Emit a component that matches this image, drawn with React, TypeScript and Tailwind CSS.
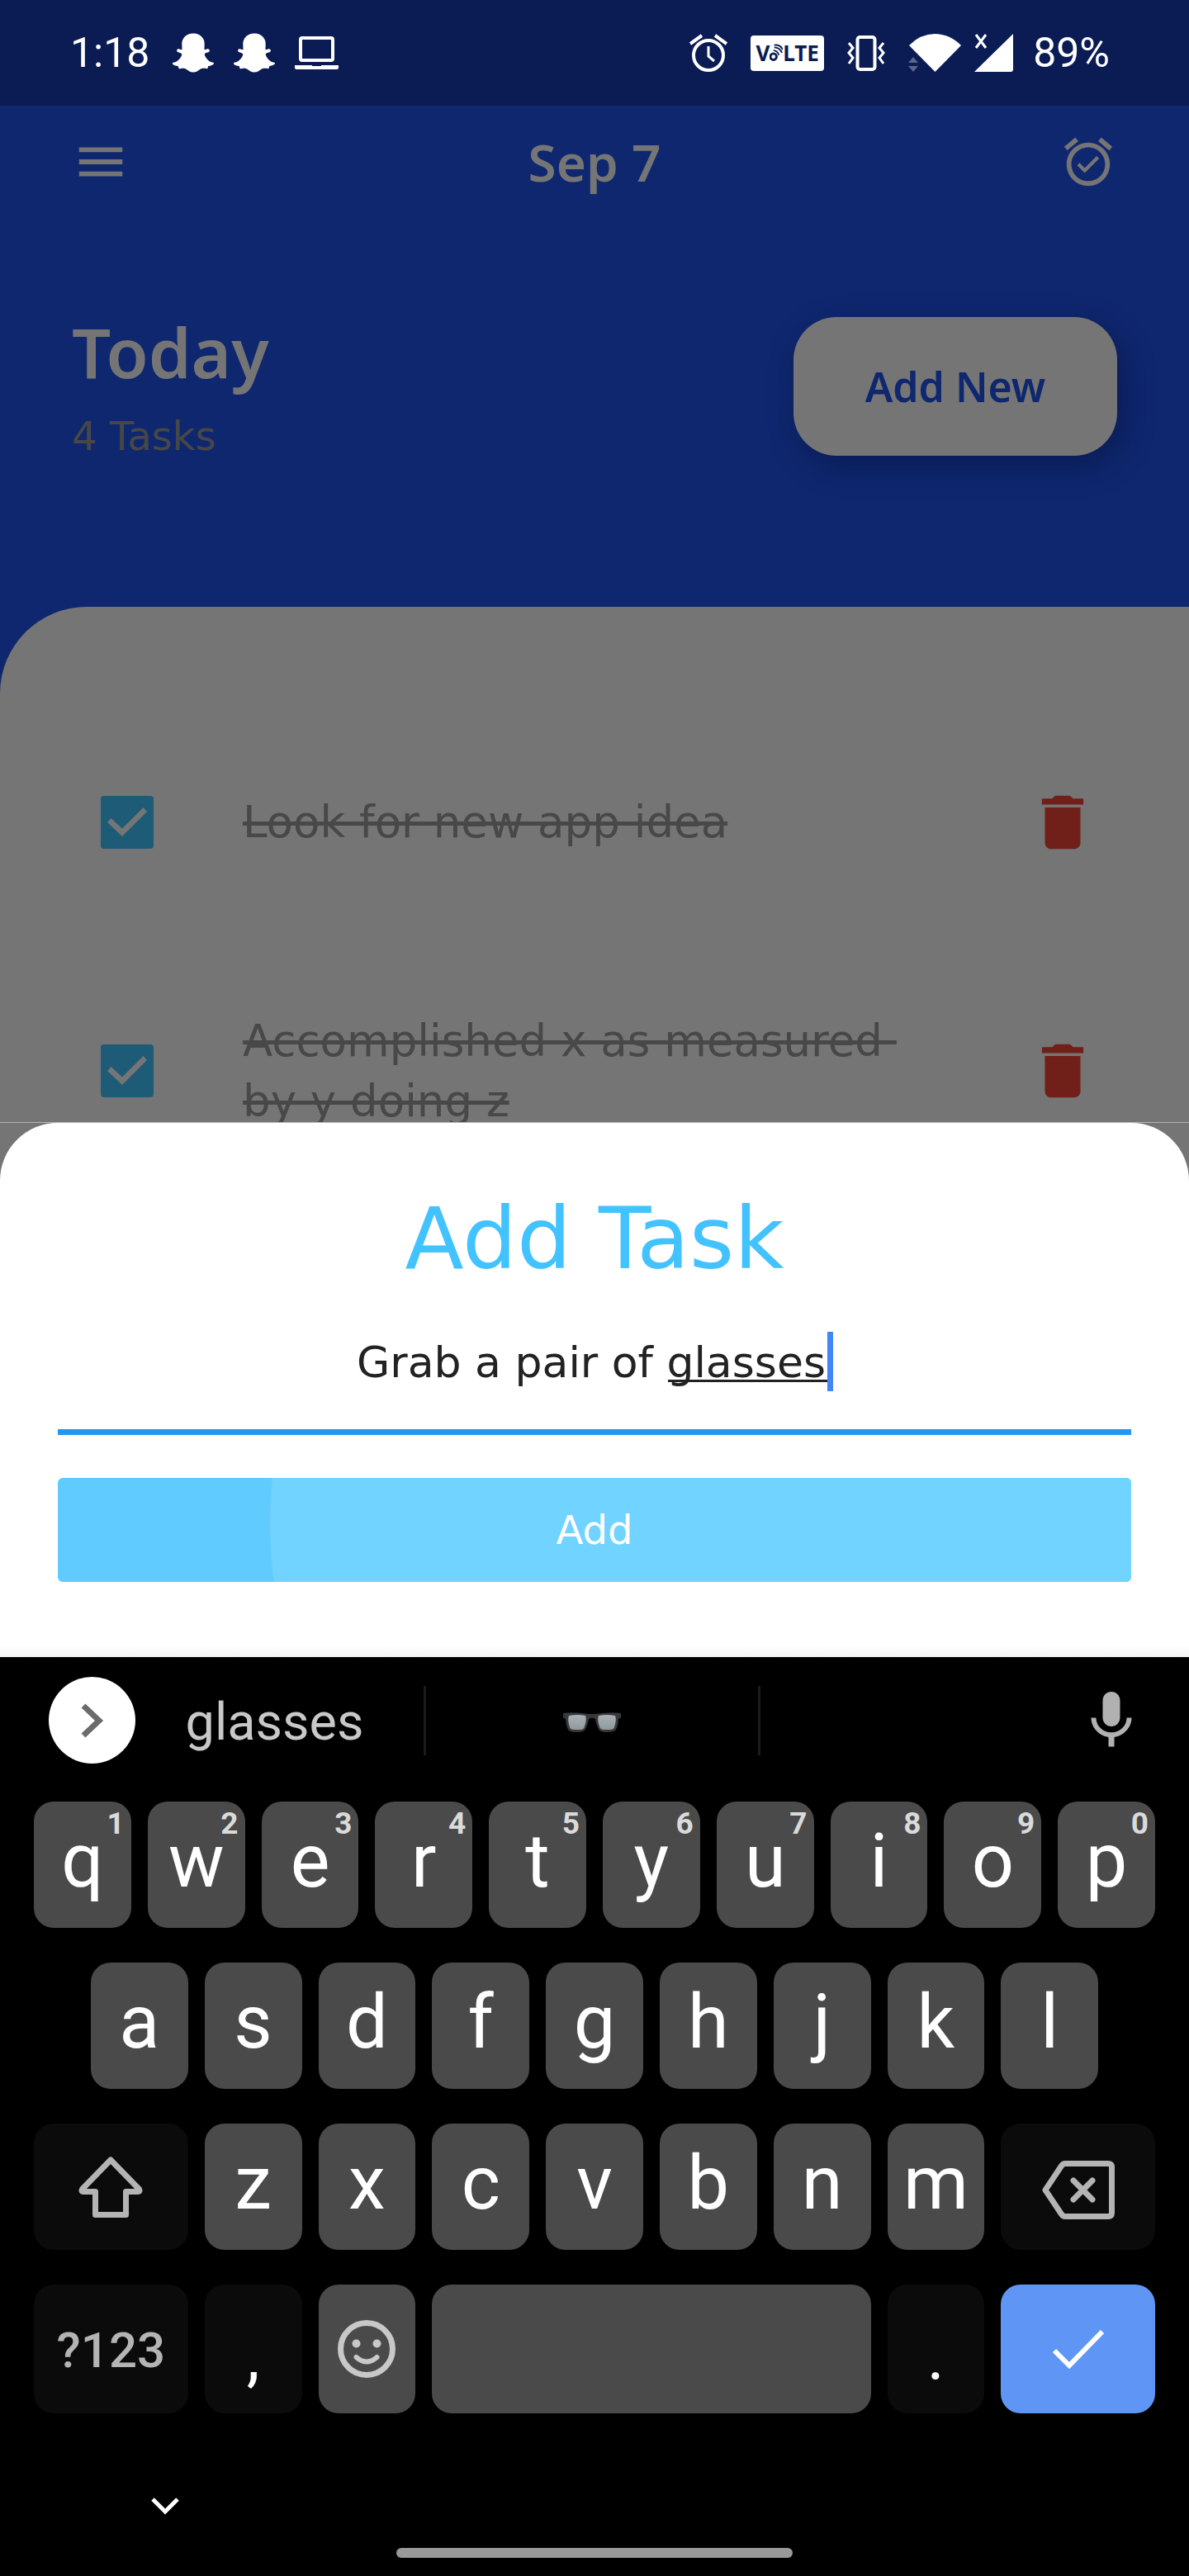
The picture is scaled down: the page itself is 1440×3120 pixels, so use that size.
import React, { useState } from "react";
import { FaSnapchatGhost } from "react-icons/fa";
import { MdAlarmOn, MdDelete, MdMenu, MdMic } from "react-icons/md";

const BODY = "font-['DejaVu_Sans',sans-serif]";
const BOLD = "font-['Noto_Sans',sans-serif] font-semibold";

function LaptopIcon() {
  return (
    <svg width="53" height="40" viewBox="0 0 53 40" aria-hidden="true">
      <rect x="7" y="2" width="39" height="27" rx="2" fill="none" stroke="#fff" strokeWidth="4" />
      <path d="M0 35H21V36H32V35H53V38Q53 40 51 40H2Q0 40 0 38Z" fill="#fff" />
    </svg>
  );
}

function AlarmIcon() {
  return (
    <svg width="46" height="46" viewBox="0 0 46 46" fill="none" stroke="#fff" strokeWidth="4" aria-hidden="true">
      <circle cx="23" cy="26" r="18" />
      <path d="M23 15V27L30 33" strokeWidth="3" />
      <path d="M1 12L15 2M45 12L31 2" />
    </svg>
  );
}

function VolteBadge() {
  return (
    <div className="flex h-[43px] w-[89px] items-center justify-center rounded-sm bg-white font-['Noto_Sans',sans-serif] text-[26px] leading-none font-bold text-[#0b1b54]">
      <span>V</span>
      <svg width="16" height="22" viewBox="0 0 17 22" fill="none" stroke="#0b1b54" aria-label="o" role="img">
        <circle cx="5" cy="16" r="4" strokeWidth="3" />
        <path d="M5 8Q10 8 12 14M6 4Q13 4 16 11M6 1Q14 0 17 7" strokeWidth="2" />
      </svg>
      <span>LTE</span>
    </div>
  );
}

function VibrateIcon() {
  return (
    <svg width="46" height="43" viewBox="0 0 46 43" fill="none" stroke="#fff" strokeWidth="3" aria-hidden="true">
      <rect x="12.500" y="2" width="21" height="39" rx="3" strokeWidth="4" />
      <path d="M2 9L7 15L2 21L7 27L2 34M44 9L39 15L44 21L39 27L44 34" />
    </svg>
  );
}

function WifiIcon() {
  return (
    <svg width="64" height="46" viewBox="0 0 64 46" aria-hidden="true">
      <path d="M1 14Q15 0 32 0Q50 0 64 14L32.500 46Z" fill="#fff" />
      <path d="M6 28L12 35H0ZM6 46L0 39H12Z" fill="#5a648c" />
    </svg>
  );
}

function SignalIcon() {
  return (
    <svg width="47" height="46" viewBox="0 0 47 46" aria-hidden="true">
      <path d="M47 0V43Q47 46 44 46H0Z" fill="#fff" />
      <path d="M2 1L14 17M14 1L2 17" stroke="#fff" strokeWidth="3" />
    </svg>
  );
}

function StatusBar() {
  return (
    <div className="flex h-32 items-center justify-between bg-[#0b1b54] pr-24 pl-[85px] font-['Roboto',sans-serif] text-[50px] leading-none text-white">
      <div className="flex items-center gap-6">
        <span>1:18</span>
        <span className="flex items-center gap-6 pl-1">
          <FaSnapchatGhost size={50} aria-hidden="true" />
          <FaSnapchatGhost size={50} aria-hidden="true" />
        </span>
        <LaptopIcon />
      </div>
      <div className="flex items-center gap-6">
        <div className="flex items-center gap-7">
          <AlarmIcon />
          <VolteBadge />
          <VibrateIcon />
          <div className="flex gap-4">
            <WifiIcon />
            <SignalIcon />
          </div>
        </div>
        <span>89%</span>
      </div>
    </div>
  );
}

function Header() {
  return (
    <header>
      <div className="flex h-[136px] items-center justify-between px-[87px] text-[#757575]">
        <button aria-label="Menu">
          <MdMenu size={70} />
        </button>
        <h1 className={`${BOLD} text-[62px] leading-none`}>Sep 7</h1>
        <button aria-label="Reminders">
          <MdAlarmOn size={70} />
        </button>
      </div>
      <div className="flex items-center justify-between px-[87px] pt-[110px] pb-[173px]">
        <div className="flex flex-col gap-5 pb-1">
          <h2 className={`${BOLD} text-[83px] leading-[104px] text-[#757575]`}>Today</h2>
          <p className={`${BODY} text-5xl leading-[60px] text-[#474747]`}>4 Tasks</p>
        </div>
        <button
          className={`${BOLD} h-[168px] w-[392px] rounded-[52px] bg-[#757575] text-[50px] text-[#0f276f] shadow-[8px_12px_36px_rgba(5,15,50,0.45)]`}
        >
          Add New
        </button>
      </div>
    </header>
  );
}

const TASKS = [
  { id: "task-1", text: "Look for new app idea" },
  { id: "task-2", text: "Accomplished x as measured by y doing z" },
];

function TaskRow({ id, text }: { id: string; text: string }) {
  const [done, setDone] = useState(true);
  return (
    <li className="flex h-[301px] items-center pr-[110px] pl-[122px]">
      <span className="relative flex size-16 shrink-0">
        <input
          id={id}
          type="checkbox"
          checked={done}
          onChange={() => setDone(!done)}
          className="size-16 appearance-none rounded border-8 border-[#1d5b77] checked:bg-[#1d5b77]"
        />
        {done && (
          <svg className="pointer-events-none absolute inset-0" width="64" height="64" viewBox="0 0 64 64" aria-hidden="true">
            <path d="M8 32L12.500 27L26 39.500L51.500 14L56 19L26 49Z" fill="#757575" />
          </svg>
        )}
      </span>
      <label
        htmlFor={id}
        className={`${BODY} ml-[108px] w-[830px] text-[53px] leading-[73px] whitespace-break-spaces text-[#484848] ${done ? "line-through" : ""}`}
      >
        {text}
      </label>
      <button aria-label={`Delete ${text}`} className="ml-auto text-[#701f19]">
        <MdDelete size={86} />
      </button>
    </li>
  );
}

function AddTaskSheet() {
  const [value, setValue] = useState("Grab a pair of glasses");
  return (
    <div className="relative -mt-[88px] border-t border-[#b4b4b4]">
      <form
        onSubmit={(e) => e.preventDefault()}
        className={`${BODY} flex flex-col rounded-t-[70px] bg-white bg-[linear-gradient(to_top,#f4f4f4,#ffffff_14px)] px-[70px] pt-20 pb-[91px]`}
      >
        <h2 className="text-center text-[104px] leading-[120px] text-[#42c3ff]">Add Task</h2>
        <div className="relative mt-3">
          <input
            aria-label="Task name"
            value={value}
            onChange={(e) => setValue(e.target.value)}
            className="h-[166px] w-full border-b-[7px] border-[#2196f3] pr-2 pb-1 text-center text-[52px] text-[#222222] caret-transparent outline-none"
          />
          {/* Composing underline and caret of the word being typed */}
          <div className="pointer-events-none absolute inset-x-0 top-[41px] flex justify-center">
            <div className="flex h-[72px] w-[578px] justify-end">
              <div className="h-[61px] w-[193px] border-b-[3px] border-[#222222]" />
              <div className="w-[7px] bg-[#4285f4]" />
            </div>
          </div>
        </div>
        <button className="relative mt-[52px] h-[126px] overflow-hidden rounded-md bg-[#5fcbff] text-5xl text-white">
          <span className="absolute -top-[485px] left-[257px] size-[1080px] rounded-full bg-[#71d3ff]" />
          <span className="relative">Add</span>
        </button>
      </form>
    </div>
  );
}

function SunglassesIcon() {
  return (
    <svg width="70" height="24" viewBox="0 0 70 24" role="img" aria-label="Sunglasses">
      <defs>
        <linearGradient id="lens" x1="0" y1="0" x2="0" y2="1">
          <stop offset="0" stopColor="#a9b1b7" />
          <stop offset="1" stopColor="#8f9a9e" />
        </linearGradient>
      </defs>
      <path
        d="M0 1Q14 -1 31 2H39Q56 -1 70 1V6L67 8Q66 22 61 23Q52 25 46 23Q42 22 39 8Q35 5 31 8Q28 22 24 23Q17 25 9 23Q4 22 3 8L0 6Z"
        fill="#38393b"
      />
      <path d="M7 4Q17 2 27 4Q29 8 26 17Q25 21 21 21H13Q9 21 8 18Q5 9 7 4ZM43 4Q53 2 63 4Q65 9 62 18Q61 21 57 21H49Q45 21 44 17Q41 8 43 4Z" fill="url(#lens)" />
    </svg>
  );
}

function SuggestionStrip() {
  return (
    <div className="mb-[22px] flex h-[153px] items-center pr-[52px] pl-[59px]">
      <button
        aria-label="More suggestions"
        className="flex size-[105px] shrink-0 items-center justify-center rounded-full bg-white"
      >
        <svg width="28" height="42" viewBox="0 0 28 42" fill="none" stroke="#6b6b6b" strokeWidth="7" aria-hidden="true">
          <path d="M3 3L22 21L3 39" />
        </svg>
      </button>
      <button className="w-[349px] pt-1 pr-9 pl-6 text-[63px] leading-[84px] text-[#c8c8c8]">glasses</button>
      <span className="h-[84px] w-[3px] bg-[#1c1c1c]" />
      <button className="flex w-[402px] justify-center pt-1">
        <SunglassesIcon />
      </button>
      <span className="h-[84px] w-[3px] bg-[#1c1c1c]" />
      <button aria-label="Voice input" className="ml-auto text-[#b1b1b1]">
        <MdMic size={84} />
      </button>
    </div>
  );
}

function Key({
  className = "",
  hint,
  label,
  children,
}: {
  className?: string;
  hint?: string;
  label?: string;
  children?: React.ReactNode;
}) {
  return (
    <button
      aria-label={label}
      className={`relative flex items-center justify-center rounded-3xl leading-none ${className}`}
    >
      {hint && (
        <span className="absolute top-2 right-2 text-[37px] leading-none font-bold text-[#dadada]">{hint}</span>
      )}
      {children}
    </button>
  );
}

const LETTER = "col-span-2 bg-[#4a4a4a] pb-2 text-[90px] text-white";
const MODIFIER = "bg-[#0b0b0b] text-[#b4b4b4]";

function Keyboard() {
  return (
    <div className="flex flex-1 flex-col bg-black font-['Roboto',sans-serif]">
      <SuggestionStrip />
      <div className="grid grid-cols-20 grid-rows-[153px_153px_153px_156px] gap-x-5 gap-y-[42px] px-[41px]">
        {"qwertyuiop".split("").map((c, i) => (
          <Key key={c} hint={String((i + 1) % 10)} className={LETTER}>
            {c}
          </Key>
        ))}
        {"asdfghjkl".split("").map((c) => (
          <Key key={c} className={c === "a" ? `${LETTER} col-start-2` : LETTER}>
            {c}
          </Key>
        ))}
        <Key label="Shift" className={`${MODIFIER} col-span-3 col-start-1`}>
          <svg width="78" height="75" viewBox="0 0 78 75" fill="none" stroke="currentColor" strokeWidth="7" strokeLinejoin="round" aria-hidden="true">
            <path d="M39 5L4.500 40.500Q3 43.500 6 43.500H20.500V71.500H57.500V43.500H72Q75 43.500 73.500 40.500Z" />
          </svg>
        </Key>
        {"zxcvbnm".split("").map((c) => (
          <Key key={c} className={LETTER}>
            {c}
          </Key>
        ))}
        <Key label="Backspace" className={`${MODIFIER} col-span-3 pt-2`}>
          <svg width="88" height="71" viewBox="0 0 88 71" fill="none" stroke="currentColor" strokeWidth="7" strokeLinecap="round" strokeLinejoin="round" aria-hidden="true">
            <path d="M28 3.500H80Q84.500 3.500 84.500 8V63Q84.500 67.500 80 67.500H28Q25 67.500 23 64L4 35.500L23 7Q25 3.500 28 3.500Z" />
            <path d="M38 24L61 47M61 24L38 47" />
          </svg>
        </Key>
        <Key className={`${MODIFIER} col-span-3 pt-1 text-[60px] font-medium`}>?123</Key>
        <Key className="col-span-2 bg-[#0b0b0b] pt-5 text-[80px] text-white">,</Key>
        <Key label="Emoji" className="col-span-2 bg-[#4a4a4a] text-[#c8c8c8]">
          <svg width="70" height="70" viewBox="0 0 70 70" fill="none" stroke="currentColor" strokeWidth="7" aria-hidden="true">
            <circle cx="35" cy="35" r="31.500" />
            <path d="M22.500 45Q35 56 47.500 45" strokeWidth="6" strokeLinecap="round" />
            <g fill="currentColor" stroke="none">
              <circle cx="22.500" cy="28.500" r="5" />
              <circle cx="47.500" cy="28.500" r="5" />
            </g>
          </svg>
        </Key>
        <Key label="Space" className="col-span-8 bg-[#4a4a4a]" />
        <Key className="col-span-2 bg-[#0b0b0b] pt-5 text-[80px] text-white">.</Key>
        <Key label="Done" className="col-span-3 bg-[#5f96f6] text-white">
          <svg width="62" height="47" viewBox="0 0 62 47" fill="none" stroke="currentColor" strokeWidth="6" aria-hidden="true">
            <path d="M2 25L20 43L60 2" />
          </svg>
        </Key>
      </div>
      <button aria-label="Hide keyboard" className="mt-[102px] ml-[183px] w-[34px] text-white">
        <svg width="34" height="22" viewBox="0 0 34 22" fill="none" stroke="currentColor" strokeWidth="5" aria-hidden="true">
          <path d="M2 2L17 17L32 2" />
        </svg>
      </button>
      <div className="mt-auto mb-[22px] h-3 w-1/3 self-center rounded-full bg-[#999999]" />
    </div>
  );
}

export default function App() {
  return (
    <div className="flex min-h-screen flex-col bg-[#0f276f]">
      <StatusBar />
      <Header />
      <main className="flex flex-1 flex-col">
        <ul className="rounded-tl-[105px] bg-[#757575] pt-[110px]">
          {TASKS.map((t) => (
            <TaskRow key={t.id} {...t} />
          ))}
        </ul>
        <AddTaskSheet />
        <Keyboard />
      </main>
    </div>
  );
}
